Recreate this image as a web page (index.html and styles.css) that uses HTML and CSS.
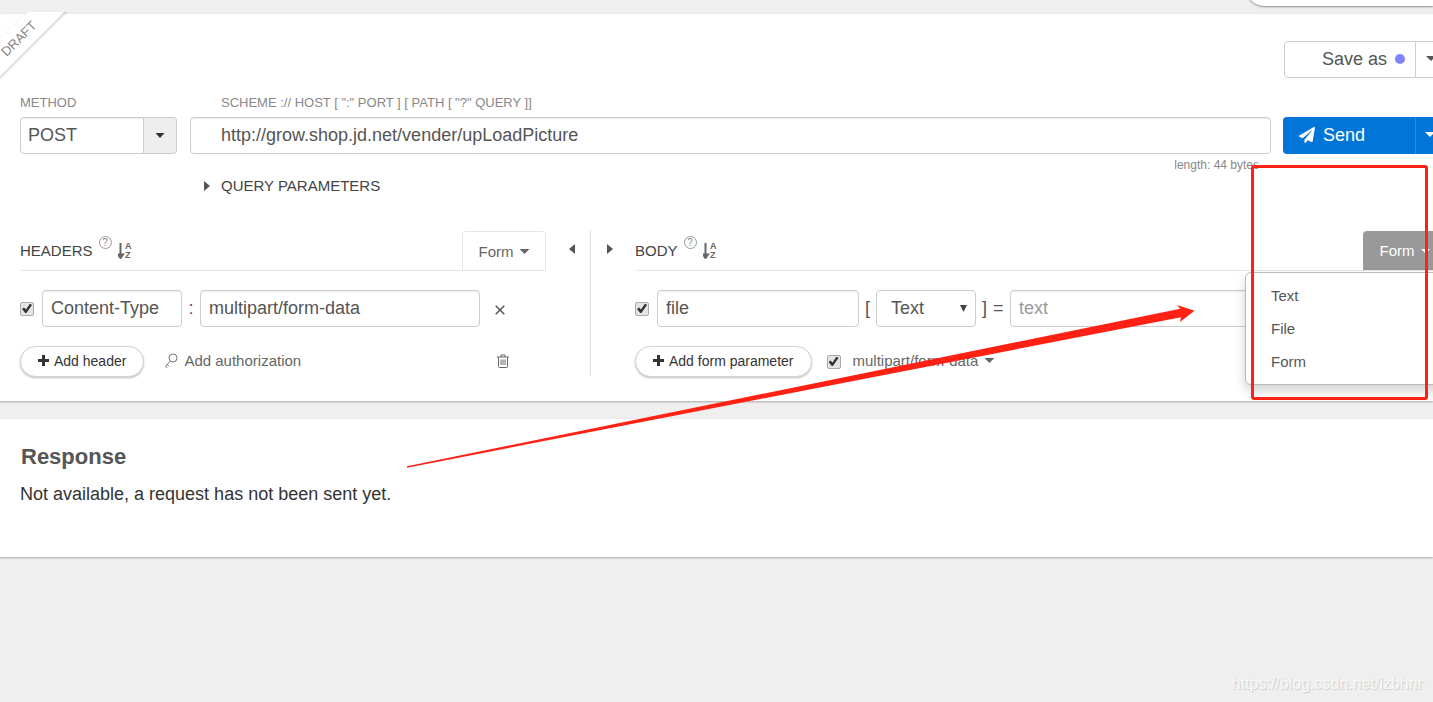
FILE: index.html
```html
<!DOCTYPE html>
<html lang="en">
<head>
<meta charset="utf-8">
<title>Request</title>
<link rel="stylesheet" href="styles.css">
</head>
<body>
<div class="page">
  <div class="topbar"><div class="topbar-pill"></div></div>

  <main class="card request">
    <div class="ribbon"><span class="ribbon-band">DRAFT</span></div>

    <div class="save-row">
      <div class="split">
        <button class="btn save" type="button">Save as <span class="dot"></span></button>
        <button class="btn toggle" type="button" aria-label="More save options"><span class="caret"></span></button>
      </div>
    </div>

    <div class="url-row">
      <div class="method">
        <label class="label" for="method">METHOD</label>
        <div class="method-group">
          <input class="field" id="method" value="POST">
          <button class="method-toggle" type="button" aria-label="Choose method"><span class="caret small"></span></button>
        </div>
      </div>
      <div class="url">
        <label class="label indent" for="url">SCHEME :// HOST [ ":" PORT ] [ PATH [ "?" QUERY ]]</label>
        <input class="field url-field" id="url" value="http://grow.shop.jd.net/vender/upLoadPicture">
        <div class="length">length: 44 bytes</div>
        <button class="query" type="button"><span class="tri right"></span>QUERY PARAMETERS</button>
      </div>
      <div class="send-col">
        <div class="split">
          <button class="btn send" type="button">
            <svg class="plane" viewBox="0 0 512 512" aria-hidden="true"><path d="M476 3 12 271c-18 10-15 35 2 43l106 44L408 106c6-5 13 3 8 8L174 406v80c0 24 28 33 42 16l64-77 125 52c14 6 30-3 33-18l72-432c3-20-17-34-34-24z"/></svg>
            Send
          </button>
          <button class="btn send-toggle" type="button" aria-label="More send options"><span class="caret"></span></button>
        </div>
      </div>
    </div>

    <div class="sections">
      <section class="headers">
        <div class="head">
          <h2>HEADERS</h2>
          <span class="help">?</span>
          <svg class="sort" viewBox="0 0 14 17" aria-hidden="true"><path d="M2.500 1v12.500M0 12.500h5L2.500 16z"/><text x="7" y="7">A</text><text x="7" y="16">Z</text></svg>
          <button class="tab" type="button">Form <span class="caret"></span></button>
        </div>
        <div class="fields">
          <input class="check" type="checkbox" checked aria-label="Enable header">
          <input class="field name" value="Content-Type" aria-label="Header name">
          <span class="colon">:</span>
          <input class="field value" value="multipart/form-data" aria-label="Header value">
          <button class="icon-btn remove" type="button" aria-label="Remove header"><svg viewBox="0 0 10 10"><path d="M.7.7l8.600 8.600M9.300.7.7 9.300"/></svg></button>
        </div>
        <div class="actions">
          <button class="pill" type="button"><span class="plus"></span>Add header</button>
          <a class="auth" href="#"><svg class="key" viewBox="0 0 14 16" aria-hidden="true"><circle cx="9" cy="5" r="4"/><path d="M6.300 8 1.500 13.400M3.200 11.500l2 2M1.500 13.200l1.700 1.700"/></svg>Add authorization</a>
          <button class="icon-btn trash" type="button" aria-label="Delete all headers"><svg viewBox="0 0 12 14"><path d="M0 3h12M4 3V1h4v2M1.500 3.200v9.300q0 1 1 1h7q1 0 1-1V3.200M4 5.500v5.500M6 5.500v5.500M8 5.500v5.500"/></svg></button>
        </div>
      </section>

      <div class="middle">
        <button class="icon-btn collapse" type="button" aria-label="Collapse headers"><span class="tri left"></span></button>
        <div class="divider"></div>
        <button class="icon-btn expand" type="button" aria-label="Collapse body"><span class="tri right"></span></button>
      </div>

      <section class="body-part">
        <div class="head">
          <h2>BODY</h2>
          <span class="help">?</span>
          <svg class="sort" viewBox="0 0 14 17" aria-hidden="true"><path d="M2.500 1v12.500M0 12.500h5L2.500 16z"/><text x="7" y="7">A</text><text x="7" y="16">Z</text></svg>
          <button class="tab active" type="button">Form <span class="caret"></span></button>
        </div>
        <div class="fields">
          <input class="check" type="checkbox" checked aria-label="Enable parameter">
          <input class="field param" value="file" aria-label="Parameter name">
          <span class="bracket">[</span>
          <span class="select-wrap"><select class="field" aria-label="Parameter type"><option>Text</option><option>File</option></select></span>
          <span class="bracket">]</span><span class="equals">=</span>
          <input class="field param-value" placeholder="text" aria-label="Parameter value">
        </div>
        <div class="actions">
          <button class="pill" type="button"><span class="plus"></span>Add form parameter</button>
          <input class="check" id="enc" type="checkbox" checked>
          <label class="encoding" for="enc">multipart/form-data <span class="caret"></span></label>
        </div>
        <div class="menu">
          <button type="button">Text</button>
          <button type="button">File</button>
          <button type="button">Form</button>
        </div>
      </section>
    </div>

    <div class="highlight"></div>
  </main>

  <section class="card response">
    <h1>Response</h1>
    <p>Not available, a request has not been sent yet.</p>
  </section>

  <svg class="arrow" width="800" height="170" viewBox="400 300 800 170" aria-hidden="true"><path d="M407 466.300 1180.300 308.700 1177 305 1194.500 310.700 1180 322 1181 317.300 407 467.700z"/></svg>
  <div class="watermark">https://blog.csdn.net/lzbhnr</div>
</div>
</body>
</html>
```
FILE: styles.css
```css
* { box-sizing: border-box; }

body {
  margin: 0;
  background: #efefef;
  color: #333;
  font: 15px/18px "Liberation Sans", Arial, sans-serif;
}

button, input, select { font: inherit; color: inherit; margin: 0; }
button { padding: 0; border: 0; background: none; cursor: pointer; }

.page { position: relative; min-height: 100vh; overflow: hidden; }

.topbar { height: 14px; display: flex; justify-content: flex-end; }
.topbar-pill {
  width: 188px;
  height: 40px;
  margin-top: -34px;
  border-radius: 0 0 0 20px;
  background: #fff;
  box-shadow: 0 1px 2px rgba(0, 0, 0, .4);
}

.card {
  position: relative;
  background: #fff;
  box-shadow: 0 1px 2px rgba(0, 0, 0, .3);
}
.request { padding: 27px 0 24px 20px; }

/* Draft ribbon */
.ribbon {
  position: absolute;
  left: 0;
  top: -2px;
  width: 76px;
  height: 76px;
  overflow: hidden;
}
.ribbon-band {
  position: absolute;
  left: -37px;
  top: 10px;
  width: 120px;
  height: 26px;
  padding: 6px 11px 6px 0;
  background: #fff;
  box-shadow: 0 1px 3px rgba(0, 0, 0, .25);
  color: #888;
  font-size: 13px;
  line-height: 14px;
  text-align: center;
  transform: rotate(-45deg);
}

/* Carets and triangles */
.caret {
  display: inline-block;
  flex: none;
  width: 10px;
  height: 5px;
  background: currentColor;
  clip-path: polygon(0 0, 100% 0, 50% 100%);
}
.caret.small { width: 9px; }
.tri {
  display: inline-block;
  width: 6px;
  height: 10px;
  background: #555;
}
.tri.right { clip-path: polygon(0 0, 100% 50%, 0 100%); }
.tri.left { clip-path: polygon(100% 0, 0 50%, 100% 100%); }

/* Split buttons */
.save-row { display: flex; justify-content: flex-end; }
.save-row .split { width: 149px; }
.split { display: flex; }
.btn {
  flex: none;
  display: flex;
  align-items: center;
  height: 37px;
  padding-bottom: 2px;
  font-size: 18px;
}
.save {
  width: 132px;
  justify-content: flex-end;
  gap: 8px;
  padding-right: 10px;
  border: 1px solid #ccc;
  border-radius: 4px 0 0 4px;
  color: #555;
}
.dot { width: 10px; height: 10px; border-radius: 50%; background: #8085ff; }
.toggle {
  width: 32px;
  padding-left: 10px;
  border: 1px solid #ccc;
  border-left: 0;
  border-radius: 0 4px 4px 0;
  color: #555;
}

.send-col { flex: 0 0 150px; min-width: 0; padding-top: 21px; }
.send {
  width: 132px;
  gap: 8px;
  padding-left: 16px;
  border-radius: 4px 0 0 4px;
  background: #0275d8;
  color: #fff;
}
.plane { width: 16px; height: 16px; fill: #fff; }
.send-toggle {
  width: 32px;
  padding-left: 9px;
  border-left: 1px solid #2a8ce0;
  border-radius: 0 4px 4px 0;
  background: #0275d8;
  color: #fff;
}

/* Method and address */
.url-row { display: flex; margin-top: 18px; }
.label {
  display: block;
  height: 14px;
  margin-bottom: 7px;
  color: #888;
  font-size: 13px;
  line-height: 14px;
}
.label.indent { margin-left: 31px; }
.field {
  width: 100%;
  height: 37px;
  min-width: 0;
  padding: 0 8px;
  border: 1px solid #ccc;
  border-radius: 4px;
  background: #fff;
  box-shadow: inset 0 1px 1px rgba(0, 0, 0, .075);
  color: #555;
  font-size: 18px;
}
.field::placeholder { color: #999; opacity: 1; }
.method { flex: 0 0 157px; margin-right: 13px; }
.method-group { display: flex; }
.method-group .field { flex: 1; border-radius: 4px 0 0 4px; padding-left: 7px; }
.method-toggle {
  display: flex;
  align-items: center;
  justify-content: center;
  flex: 0 0 33px;
  border: 1px solid #ccc;
  border-left: 0;
  border-radius: 0 4px 4px 0;
  background: #eee;
}
.url { flex: 1; min-width: 0; margin-right: 12px; }
.url-field { display: block; padding-left: 30px; }
.length {
  margin: 3px 12px 4px 0;
  color: #888;
  font-size: 12px;
  line-height: 16px;
  text-align: right;
}
.query { display: flex; align-items: center; gap: 11px; margin-left: 14px; color: #444; }

/* Header and body sections */
.sections { display: flex; margin-top: 36px; }
.headers { flex: 526 1 0; min-width: 0; }
.body-part { position: relative; flex: 798 1 0; min-width: 0; }
.head { display: flex; height: 40px; border-bottom: 1px solid #e6e6e6; }
.head h2 { margin: 11px 6px 0 0; color: #444; font-size: 15px; font-weight: normal; line-height: 18px; }
.help {
  width: 13px;
  height: 13px;
  margin: 5px 6px 0 0;
  border: 1px solid #999;
  border-radius: 50%;
  color: #888;
  font-size: 10px;
  line-height: 11px;
  text-align: center;
}
.sort { width: 14px; height: 17px; margin-top: 11px; fill: #666; }
.sort path { stroke: #666; stroke-width: 2; }
.sort text { font: bold 9px "Liberation Sans", Arial, sans-serif; }
.tab {
  display: flex;
  align-items: center;
  justify-content: center;
  gap: 6px;
  width: 84px;
  height: 40px;
  margin-left: auto;
  border: 1px solid #e6e6e6;
  border-bottom: 0;
  border-radius: 4px 4px 0 0;
  color: #666;
}
.tab.active {
  flex: none;
  height: 39px;
  margin-right: -14px;
  border-color: #999;
  background: #999;
  color: #fff;
}

.fields { display: flex; align-items: center; margin-top: 19px; color: #555; font-size: 18px; }
.check {
  flex: none;
  position: relative;
  width: 14px;
  height: 14px;
  appearance: none;
  border: 1px solid #aaa;
  border-radius: 2px;
  background: #e4e4e4;
}
.check:checked::before {
  content: "";
  display: block;
  width: 10px;
  height: 10px;
  margin: 1px;
  background: #333;
  clip-path: polygon(0 55%, 20% 40%, 40% 60%, 80% 0, 100% 14%, 44% 96%, 32% 96%);
}
.fields .check { margin-right: 8px; }
.name { flex: 140 1 140px; }
.value { flex: 280 1 280px; }
.colon { flex: 0 0 18px; padding-bottom: 2px; text-align: center; }
.bracket { flex: 0 0 17px; padding-bottom: 2px; text-align: center; }
.equals { flex: none; width: 16px; margin-right: 1px; padding-bottom: 2px; }
.icon-btn { display: flex; }
.icon-btn svg { fill: none; stroke: #555; }
.remove { flex: none; margin: 2px 41px 0 15px; }
.remove svg { width: 10px; height: 10px; stroke-width: 1.500; }

.param { flex: 0 0 202px; }
.param-value { flex: 1; margin-right: -14px; }
.select-wrap { position: relative; flex: 0 0 100px; }
.select-wrap::after {
  content: "";
  position: absolute;
  right: 9px;
  top: 15px;
  width: 7px;
  height: 7px;
  background: #444;
  clip-path: polygon(0 0, 100% 0, 50% 100%);
}
.select-wrap .field { display: block; padding: 0 14px 2px; appearance: none; box-shadow: none; }

.actions { display: flex; align-items: center; height: 31px; margin-top: 19px; color: #666; }
.pill {
  display: flex;
  align-items: center;
  gap: 5px;
  height: 31px;
  padding: 0 17px 2px;
  border: 1px solid #d4d4d4;
  border-radius: 16px;
  background: #fff;
  box-shadow: 0 1px 2px rgba(0, 0, 0, .25);
  color: #333;
  font-size: 14px;
}
.plus {
  width: 11px;
  height: 11px;
  background: linear-gradient(#333, #333) center / 11px 3px no-repeat, linear-gradient(#333, #333) center / 3px 11px no-repeat;
}
.auth {
  display: flex;
  align-items: center;
  gap: 6px;
  margin-left: 20px;
  padding-bottom: 2px;
  color: #666;
  text-decoration: none;
}
.key { width: 14px; height: 16px; fill: none; stroke: #777; }
.trash { margin: 0 37px 2px auto; }
.trash svg { width: 12px; height: 14px; stroke: #666; }
.actions .check { margin-left: 15px; }
.encoding { display: flex; align-items: center; gap: 6px; margin-left: 12px; padding-bottom: 2px; }

.middle { flex: 0 0 89px; display: flex; }
.divider { width: 1px; height: 145px; margin: 0 16px 0 15px; background: #ddd; }
.collapse { height: 10px; margin: 13px 0 0 23px; }
.expand { height: 10px; margin-top: 13px; }

.menu {
  position: absolute;
  top: 41px;
  right: -20px;
  display: flex;
  flex-direction: column;
  gap: 15px;
  width: 208px;
  padding: 14px 25px 13px;
  border: 1px solid #bbb;
  border-radius: 6px;
  background: #fff;
  box-shadow: 0 6px 12px rgba(0, 0, 0, .175);
}
.menu button { color: #555; text-align: left; }

/* Annotations */
.highlight {
  position: absolute;
  right: 5px;
  top: 151px;
  width: 177px;
  height: 235px;
  border: 3px solid #ff2214;
  border-radius: 3px;
  pointer-events: none;
}
.arrow { position: absolute; left: 400px; top: 300px; fill: #ff2214; pointer-events: none; }

.response { margin-top: 18px; padding: 24px 20px 52px; }
.response h1 { margin: 0 0 12px 1px; color: #555; font-size: 22px; line-height: 28px; }
.response p { margin: 0; font-size: 18px; line-height: 22px; }

.watermark {
  position: absolute;
  right: 10px;
  bottom: 8px;
  color: #f8f8f8;
  font-size: 16px;
  line-height: 20px;
  text-shadow: 1px 1px 1px #ccc;
}
```
